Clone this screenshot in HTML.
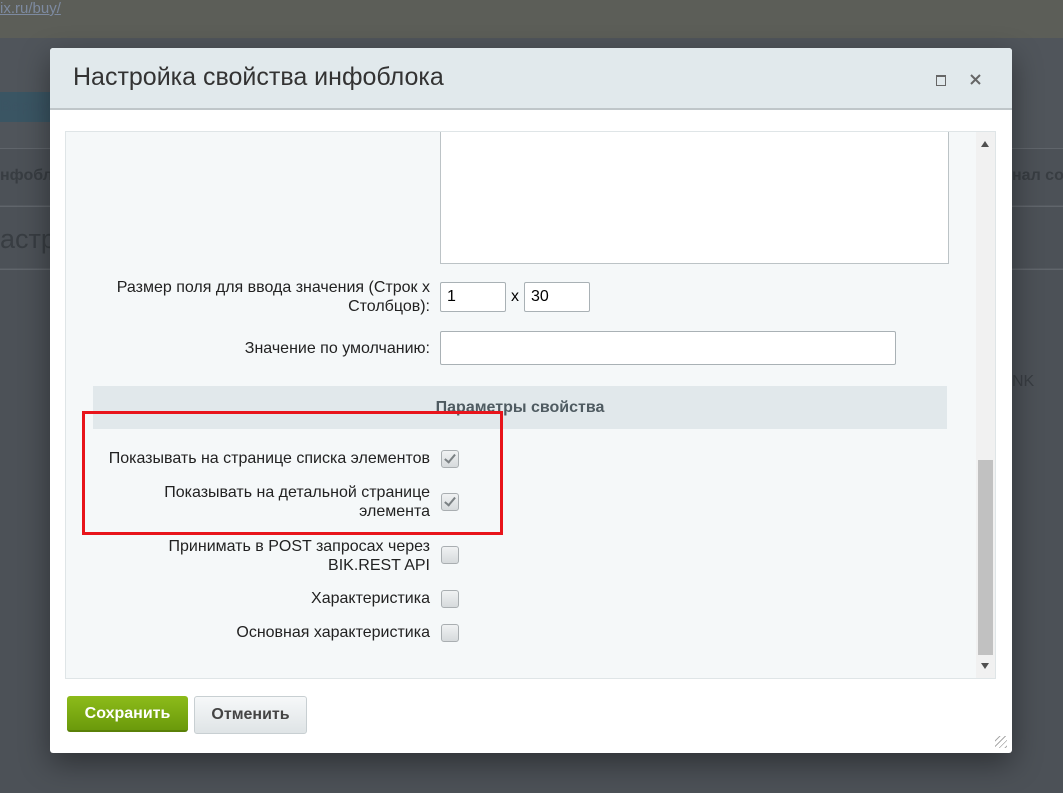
<!DOCTYPE html>
<html><head><meta charset="utf-8"><style>
body{margin:0;width:1063px;height:793px;overflow:hidden;font-family:"Liberation Sans",sans-serif;background:#4c5157;position:relative}
.top{position:absolute;left:0;top:0;width:1063px;height:38px;background:#5c5e58}
.top a{position:absolute;left:0;top:0;color:#7d8aa0;font-size:15px;text-decoration:underline}
.band{position:absolute;left:0;width:1063px;background:#555a60;border-bottom:1px solid #60656b}
.bgt{position:absolute;color:#383d42;font-size:16px;font-weight:bold;white-space:nowrap}
.dlg{position:absolute;left:50px;top:48px;width:962px;height:705px;background:#fff;border-radius:3px;box-shadow:0 10px 30px rgba(0,0,0,.4)}
.hd{height:60px;background:#e1e9ec;border-bottom:2px solid #bfc6c9;border-radius:3px 3px 0 0;position:relative}
.hd h1{margin:0;position:absolute;left:23px;top:15px;font-weight:normal;font-size:25px;color:#333}
.panel{position:absolute;left:15px;top:83px;width:929px;height:546px;background:#f5f8f9;border:1px solid #dfe5e7;overflow:hidden}
.sb{position:absolute;right:0;top:0;width:19px;height:546px;background:#f1f1f1}
.thumb{position:absolute;left:2px;top:328px;width:15px;height:195px;background:#c1c1c1}
.lbl{position:absolute;right:565px;text-align:right;font-size:16px;color:#222;line-height:19px;white-space:nowrap}
.cb{position:absolute;left:375px;width:16px;height:16px;border:1px solid #a9aeb1;border-radius:3px;background:linear-gradient(#f0f2f3,#d6dadc)}
.cb.on::after{content:"";position:absolute;left:5px;top:1px;width:4px;height:9px;border:solid #7b8184;border-width:0 2px 2px 0;transform:rotate(40deg)}
input{position:absolute;border:1px solid #a9b1b5;border-radius:2px;background:#fff;height:30px;box-sizing:border-box;font:16px "Liberation Sans",sans-serif;padding:0 6px}
.btn{position:absolute;top:648px;height:36px;border-radius:3px;font-weight:bold;font-size:16px;line-height:36px;text-align:center}
</style></head><body>
<div class="top"><a>ix.ru/buy/</a></div>
<div class="band" style="top:38px;height:110px;background:#50555b"></div>
<div class="bgt" style="left:0;top:92px;color:#3b5463;background:#3a5563;width:55px;height:30px;line-height:30px">Верну</div>
<div class="bgt" style="left:0;top:167px">нфобло</div>
<div class="bgt" style="left:1012px;top:167px">нал со</div>
<div class="band" style="top:205px;height:1px"></div>
<div class="bgt" style="left:0;top:224px;font-size:27px;font-weight:normal">астро</div>
<div class="band" style="top:268px;height:1px"></div>
<div class="bgt" style="left:1012px;top:373px;font-weight:normal">NK</div>
<div class="dlg">
 <div class="hd"><h1>Настройка свойства инфоблока</h1>
  <div style="position:absolute;left:886px;top:27px;width:8px;height:8px;border:1px solid #666;border-top-width:2px"></div>
  <svg style="position:absolute;left:920px;top:26px" width="11" height="11"><path d="M1 1L10 10M10 1L1 10" stroke="#666" stroke-width="2"/></svg>
 </div>
 <div class="panel">
  <div style="position:absolute;left:374px;top:-1px;width:507px;height:131px;background:#fff;border:1px solid #bcc3c6"></div>
  <div class="lbl" style="top:146px">Размер поля для ввода значения (Строк х<br>Столбцов):</div>
  <input style="left:374px;top:150px;width:66px" value="1">
  <div style="position:absolute;left:445px;top:156px;font-size:16px">x</div>
  <input style="left:458px;top:150px;width:66px" value="30">
  <div class="lbl" style="top:207px">Значение по умолчанию:</div>
  <input style="left:374px;top:199px;width:456px;height:34px">
  <div style="position:absolute;left:27px;top:254px;width:854px;height:43px;background:#e1e8eb;text-align:center;line-height:43px;font-size:16px;font-weight:bold;color:#4f5b61">Параметры свойства</div>
  <div class="lbl" style="top:317px">Показывать на странице списка элементов</div><div class="cb on" style="top:318px"></div>
  <div class="lbl" style="top:351px">Показывать на детальной странице<br>элемента</div><div class="cb on" style="top:361px"></div>
  <div class="lbl" style="top:405px">Принимать в POST запросах через<br>BIK.REST API</div><div class="cb" style="top:414px"></div>
  <div class="lbl" style="top:457px">Характеристика</div><div class="cb" style="top:458px"></div>
  <div class="lbl" style="top:491px">Основная характеристика</div><div class="cb" style="top:492px"></div>
  <div class="sb"><div style="position:absolute;left:5px;top:9px;border:4px solid transparent;border-bottom:6px solid #505050;border-top:0"></div><div class="thumb"></div><div style="position:absolute;left:5px;top:531px;border:4px solid transparent;border-top:6px solid #505050;border-bottom:0"></div></div>
 </div>
 <div style="position:absolute;left:32px;top:363px;width:421px;height:124px;border:3px solid #e8141b;box-sizing:border-box"></div>
 <div class="btn" style="left:17px;width:121px;background:linear-gradient(#8dbb1a,#6b9a0b);color:#fff;border-bottom:2px solid #5a8008;height:34px">Сохранить</div>
 <div class="btn" style="left:144px;width:111px;background:linear-gradient(#f6f8f9,#dfe4e6);border:1px solid #c8cfd2;color:#444;height:36px">Отменить</div>
 <div style="position:absolute;right:5px;bottom:5px;width:12px;height:12px;background:repeating-linear-gradient(135deg,transparent 0 3px,#aaa 3px 4px)"></div>
</div>
</body></html>
